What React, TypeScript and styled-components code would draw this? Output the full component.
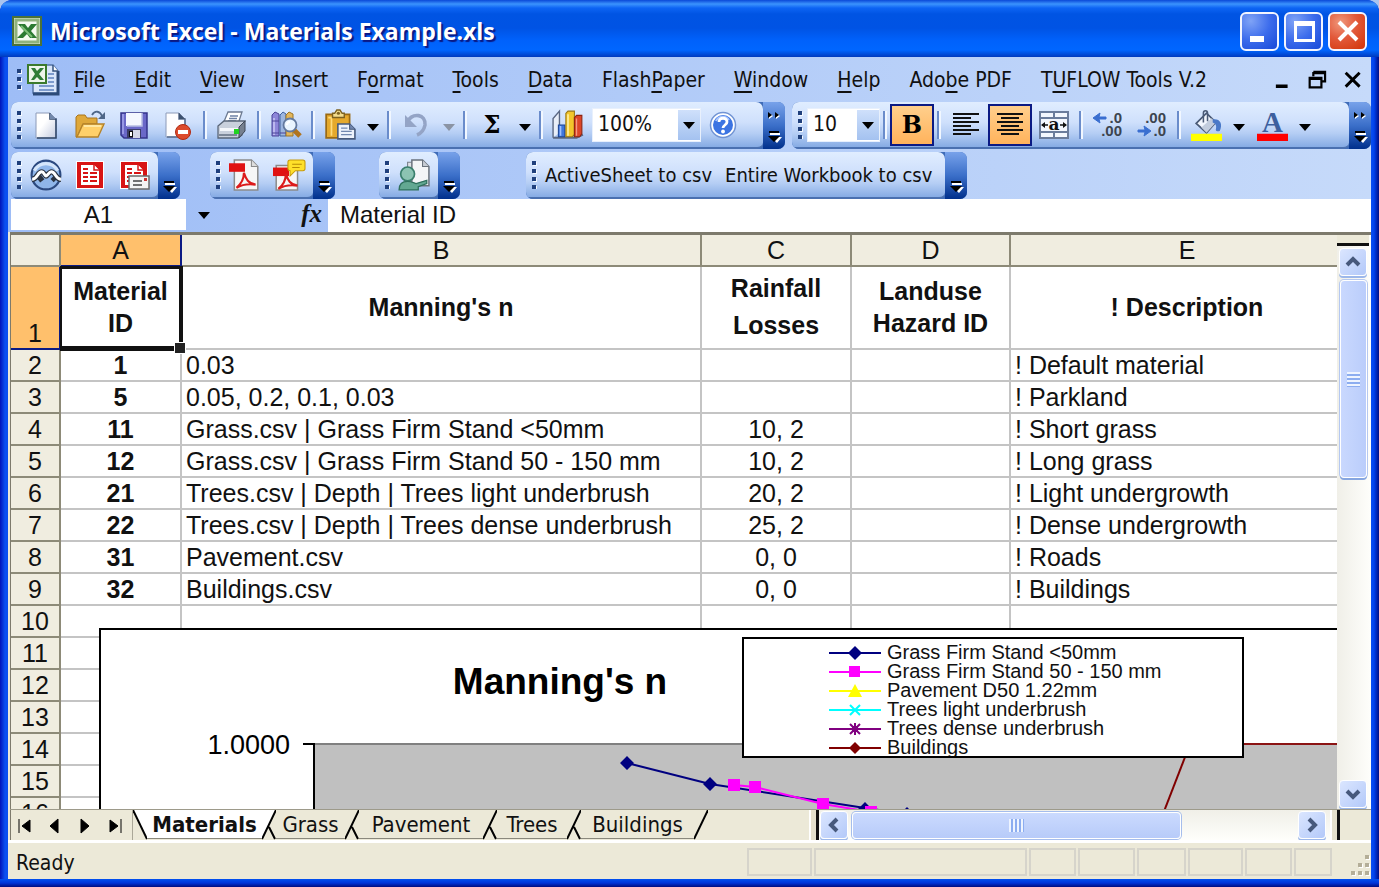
import React from "react";
import styled, { createGlobalStyle, css } from "styled-components";

const ui = `"DejaVu Sans Condensed", "Noto Sans", sans-serif`;
const cellFont = `"Liberation Sans", Arial, sans-serif`;

const GlobalStyle = createGlobalStyle`
  *, *::before, *::after { box-sizing: border-box; }
  body { margin: 0; background: #a9c4ef; font-family: ${ui}; color: #111; }
  button, input, select { font: inherit; color: inherit; margin: 0; }
`;

/* ---------- window frame ---------- */

const Window = styled.div`
  display: flex;
  flex-direction: column;
  height: 100vh;
  min-width: 900px;
  overflow: hidden;
  border-radius: 12px 12px 0 0;
  background: linear-gradient(to right, #0013b8 0, #0a4ff0 5px, #0a4ff0 8px, #0a4ff0 calc(100% - 8px), #0042ee calc(100% - 5px), #000f86 100%);
`;

const TitleBar = styled.header`
  flex: none;
  display: flex;
  align-items: center;
  height: 57px;
  padding: 5px 12px 0 12px;
  background: linear-gradient(#0a48d8 0, #3b93fd 4px, #0d64f4 8px, #0054e3 14px, #0053e4 28px, #0061fb 40px, #0066ff 50px, #0040c8 56px, #0038bb 57px);
`;

const Title = styled.h1`
  flex: 1;
  margin: 0 0 0 8px;
  font: 700 23px/30px "Open Sans", "Noto Sans", sans-serif;
  color: #fff;
  text-shadow: 2px 2px 1px #0a1883;
  white-space: nowrap;
`;

const WindowButtons = styled.div`
  display: flex;
  gap: 5px;
`;

const WindowButton = styled.button<{ $danger?: boolean }>`
  width: 39px;
  height: 39px;
  padding: 0;
  display: grid;
  place-items: center;
  border: 2px solid #f2f5ff;
  border-radius: 6px;
  background: ${(p) =>
    p.$danger
      ? "radial-gradient(circle at 30% 25%, #f0987c 0, #e2593a 45%, #d43a10 90%)"
      : "radial-gradient(circle at 25% 20%, #7fa3f6 0, #3c6cec 50%, #1f50dc 90%)"};
`;

const Body = styled.main`
  flex: 1;
  min-height: 0;
  display: flex;
  flex-direction: column;
  margin: 0 8px;
  background: #ece9d8;
`;

const BottomEdge = styled.div`
  flex: none;
  height: 8px;
  background: linear-gradient(#0050f0, #0034d8 4px, #000c80);
`;

/* ---------- menu and toolbars ---------- */

const Dock = styled.div`
  flex: none;
  background: linear-gradient(to right, #9ebdf6, #c6dafa);
`;

const MenuBar = styled.nav`
  display: flex;
  align-items: center;
  height: 45px;
  padding-left: 8px;
`;

const MenuItem = styled.button`
  height: 32px;
  padding: 0 15px 0 14px;
  border: 0;
  background: none;
  font-size: 21px;
  line-height: 32px;
  white-space: nowrap;
  u { text-underline-offset: 4px; text-decoration-thickness: 2px; }
`;

const Spacer = styled.div`
  flex: 1;
`;

const MdiButton = styled.button`
  width: 36px;
  height: 32px;
  padding: 0;
  border: 0;
  background: none;
`;

const ToolRow = styled.div<{ $second?: boolean }>`
  display: flex;
  align-items: flex-start;
  height: ${(p) => (p.$second ? 47 : 50)}px;
  padding-left: 3px;
`;

const Bar = styled.div<{ $grow?: boolean; $gap?: number }>`
  display: flex;
  align-items: stretch;
  height: 47px;
  margin-left: ${(p) => p.$gap ?? 0}px;
  border-radius: 7px;
  overflow: hidden;
  background: #3f6cb8;
  ${(p) => p.$grow && css`flex: 1;`}
`;

const BarFace = styled.div<{ $end?: number }>`
  flex: 1;
  display: flex;
  align-items: center;
  padding: 1px ${(p) => p.$end ?? 2}px 0 6px;
  border-bottom: 2px solid #4a70b0;
  border-radius: 0 7px 6px 0;
  background: linear-gradient(#e0edff 0, #cfe0fc 45%, #b4cdf4 70%, #86abe4 100%);
`;

const Cap = styled.button`
  width: 22px;
  padding: 0;
  border: 0;
  background: linear-gradient(#78a2ea, #3b6fc9 50%, #00308c);
`;

const GripDots = styled.span`
  flex: none;
  width: 5px;
  height: 28px;
  margin-right: 2px;
  background:
    linear-gradient(#20407c, #20407c) 0 0 / 4px 4px,
    repeating-linear-gradient(transparent 0 1px, #f4f9ff 1px 5px, transparent 5px 8px) 1px 0;
  background:
    repeating-linear-gradient(#20407c 0 4px, transparent 4px 8px) 0 0 / 4px 100% no-repeat,
    repeating-linear-gradient(transparent 0 1px, #f4f9ff 1px 5px, transparent 5px 8px) 1px 0 / 4px 100% no-repeat;
`;

const MenuGrip = styled(GripDots)`
  height: 21px;
  margin: 0 5px 0 1px;
`;

const ToolButton = styled.button<{ $on?: boolean }>`
  flex: none;
  width: 44px;
  height: 42px;
  padding: 0;
  display: grid;
  place-items: center;
  border: 2px solid ${(p) => (p.$on ? "#0b1a84" : "transparent")};
  background: ${(p) => (p.$on ? "linear-gradient(#ffcf8c, #ffb35c)" : "none")};
`;

const DropButton = styled.button`
  flex: none;
  width: 22px;
  height: 42px;
  padding: 0;
  border: 0;
  background: none;
`;

const TextButton = styled.button`
  height: 42px;
  padding: 0 7px 0 6px;
  border: 0;
  background: none;
  font-size: 20px;
  white-space: nowrap;
`;

const Divider = styled.span`
  flex: none;
  width: 4px;
  height: 28px;
  margin: 0 3px;
  border-left: 2px solid #6a8ccb;
  border-right: 2px solid #f1f7ff;
`;

const Glyph = styled.span<{ $size: number }>`
  font: 700 ${(p) => p.$size}px/34px "DejaVu Serif", serif;
  color: #000;
`;

const Combo = styled.label<{ $wide?: boolean }>`
  flex: none;
  display: grid;
  width: ${(p) => (p.$wide ? 109 : 73)}px;
  height: 34px;
  margin: 0 0 0 2px;
  background: #fff;
  border: 1px solid #e8f0fc;
`;

const ComboSelect = styled.select`
  grid-area: 1 / 1;
  appearance: none;
  width: 100%;
  padding: 0 24px 2px 5px;
  border: 0;
  border-radius: 0;
  background: transparent;
  font-size: 21px;
`;

const ComboArrow = styled.span`
  grid-area: 1 / 1;
  justify-self: end;
  display: grid;
  place-items: center;
  width: 22px;
  margin: 1px 0;
  background: linear-gradient(#cfe0fb, #a4c2f0);
  pointer-events: none;
`;

const FormulaBar = styled.div`
  display: flex;
  height: 33px;
  padding-left: 3px;
  font-family: ${cellFont};
  font-size: 24px;
`;

const NameBox = styled.input`
  width: 175px;
  height: 31px;
  padding: 0;
  border: 0;
  background: #fff;
  text-align: center;
`;

const NameDrop = styled.button`
  display: grid;
  place-items: center;
  width: 36px;
  height: 33px;
  padding: 0;
  border: 0;
  background: none;
`;

const FxButton = styled.button`
  width: 106px;
  padding: 0 6px 4px 0;
  border: 0;
  background: none;
  font: italic 700 25px/28px "Liberation Serif", serif;
  text-align: right;
`;

const FormulaInput = styled.input`
  flex: 1;
  min-width: 0;
  padding: 0 0 2px 12px;
  border: 0;
  background: #fff;
`;

/* ---------- worksheet ---------- */

const SheetRow = styled.section`
  flex: 1;
  min-height: 0;
  display: flex;
  margin-left: 2px;
  border-top: 3px solid #7d7a6c;
  border-left: 1px solid #7d7a6c;
`;

const Sheet = styled.div`
  position: relative;
  flex: 1;
  min-width: 0;
  overflow: hidden;
  background: #fff;
`;

const Grid = styled.table`
  width: 100%;
  table-layout: fixed;
  border-collapse: separate;
  border-spacing: 0;
  font: 25px/30px ${cellFont};
  color: #111;
`;

const headLine = css`
  border-right: 2px solid #8d8a78;
  border-bottom: 2px solid #8d8a78;
`;

const ColHead = styled.th<{ $on?: boolean }>`
  ${headLine}
  height: 32px;
  padding: 0;
  font-weight: 400;
  background: ${(p) => (p.$on ? "#ffc06c" : "#f0ede0")};
  ${(p) => p.$on && css`border-right-color: #0b1a84; border-bottom-color: #0b1a84;`}
  &:last-child { border-right: 0; padding-left: 26px; }
`;

const RowHead = styled.th<{ $on?: boolean }>`
  ${headLine}
  padding: 0;
  font-weight: 400;
  vertical-align: bottom;
  background: ${(p) => (p.$on ? "#ffc06c" : "#f0ede0")};
  ${(p) => p.$on && css`border-right-color: #0b1a84; border-bottom-color: #0b1a84;`}
`;

const Cell = styled.td<{ $center?: boolean; $bold?: boolean }>`
  height: 32px;
  padding: 0 4px;
  border-right: 2px solid #c4c4c4;
  border-bottom: 2px solid #c4c4c4;
  white-space: nowrap;
  text-align: ${(p) => (p.$center ? "center" : "left")};
  font-weight: ${(p) => (p.$bold ? 700 : 400)};
  &:last-child { border-right: 0; }
`;

const HeadingCell = styled(Cell)<{ $loose?: boolean; $current?: boolean }>`
  ${(p) => p.$current && css`position: relative; z-index: 1;`}
  height: 83px;
  padding: 0 0 2px;
  line-height: ${(p) => (p.$loose ? 37 : 32)}px;
  &:last-child { padding-left: 26px; }
`;

const Selection = styled.span`
  position: absolute;
  inset: -1px -3px -3px -1px;
  border: 4px solid #111;
  border-width: 3px 4px 5px 2px;
  &::after {
    content: "";
    position: absolute;
    right: -6px;
    bottom: -7px;
    width: 10px;
    height: 10px;
    background: #222;
    outline: 1px solid #fff;
  }
`;

/* ---------- embedded chart ---------- */

const ChartFrame = styled.figure`
  position: absolute;
  left: 88px;
  top: 393px;
  right: 0;
  bottom: 0;
  margin: 0;
  border: solid #000;
  border-width: 2px 0 0 2px;
  background: #fff;
  overflow: hidden;
`;

const Plot = styled.svg`
  display: block;
  width: 100%;
  height: 100%;
  font-family: ${cellFont};
`;

const Legend = styled.ul`
  position: absolute;
  left: 641px;
  top: 7px;
  width: 502px;
  height: 121px;
  margin: 0;
  padding: 4px 0 0 85px;
  border: 2px solid #000;
  background: #fff;
  overflow: hidden;
  list-style: none;
`;

const LegendItem = styled.li`
  display: flex;
  align-items: center;
  gap: 6px;
  height: 19px;
  font: 20px/19px ${cellFont};
  white-space: nowrap;
`;

/* ---------- scroll bars, tabs, status ---------- */

const VScroll = styled.div`
  flex: none;
  display: flex;
  flex-direction: column;
  align-items: center;
  width: 34px;
  padding: 0 2px 1px 0;
  background: linear-gradient(to right, #f0efe8, #fefefb);
`;

const VSplit = styled.div`
  width: 100%;
  height: 11px;
  margin-bottom: 2px;
  border-bottom: 3px solid #111;
  background: #ece9d8;
`;

const ScrollButton = styled.button`
  flex: none;
  width: 28px;
  height: 28px;
  padding: 0;
  display: grid;
  place-items: center;
  border: 1px solid #fff;
  border-radius: 4px;
  background: linear-gradient(135deg, #dbe6ff, #b3c9f9);
  box-shadow: 0 2px 0 #9db8ea;
`;

const VThumb = styled.div`
  display: grid;
  place-items: center;
  width: 27px;
  height: 198px;
  margin-top: 4px;
  border: 1px solid #fff;
  border-radius: 4px;
  background: linear-gradient(to right, #c9d8fe, #bacdfb);
  box-shadow: 0 2px 0 #86a6e0, 0 0 0 1px #b5c8f0;
`;

const VRidges = styled.span`
  width: 13px;
  height: 15px;
  background: repeating-linear-gradient(#eef4ff 0 2px, #8cadf0 2px 4px);
`;

const TabRow = styled.div`
  flex: none;
  display: flex;
  height: 31px;
  margin-left: 2px;
  border-top: 1px solid #9d9a8a;
  background: #ece9d8;
`;

const NavButtons = styled.div`
  display: flex;
  width: 123px;
  padding: 2px 1px 0 0;
  border-left: 1px solid #7d7a6c;
  border-right: 1px solid #aaa798;
`;

const NavButton = styled.button`
  flex: 1;
  display: grid;
  place-items: center;
  padding: 0 3px 0 0;
  border: 0;
  background: none;
`;

const Slant = styled.svg`
  flex: none;
  display: block;
  width: 14px;
  height: 30px;
`;

const Tab = styled.button<{ $active?: boolean; $w: number }>`
  flex: none;
  width: ${(p) => p.$w}px;
  height: 29px;
  padding: 2px 0 0;
  border: 0;
  border-bottom: 1px solid #8a887c;
  background: ${(p) => (p.$active ? "#fff" : "#ece9d8")};
  font-size: 22px;
  line-height: 26px;
  font-weight: ${(p) => (p.$active ? 700 : 400)};
  white-space: nowrap;
`;

const HScroll = styled.div`
  flex: none;
  display: flex;
  align-items: center;
  width: 39%;
  min-width: 300px;
`;

const HSplit = styled.span`
  flex: none;
  width: 10px;
  height: 30px;
  border-left: 2px solid #fff;
  border-right: 3px solid #111;
  background: #e4e0cc;
`;

const HTrack = styled.div`
  flex: 1;
  display: flex;
  align-items: center;
  height: 30px;
  padding: 0 4px 0 1px;
  background: linear-gradient(#f0efe8, #fefefb);
`;

const HThumb = styled.div`
  flex: none;
  display: grid;
  place-items: center;
  width: 65%;
  height: 27px;
  margin-left: 4px;
  border: 1px solid #fff;
  border-radius: 4px;
  background: linear-gradient(#cbdafe, #b7cbf9);
  box-shadow: 0 0 0 1px #a5bdec;
`;

const HRidges = styled.span`
  width: 15px;
  height: 13px;
  background: repeating-linear-gradient(to right, #eef4ff 0 2px, #8cadf0 2px 4px);
`;

const Corner = styled.div`
  flex: none;
  width: 31px;
`;

const StatusBar = styled.footer`
  flex: none;
  display: flex;
  align-items: center;
  height: 39px;
  border-top: 3px solid #fff;
  background: #ece9d8;
  padding: 2px 0 0 8px;
`;

const StatusText = styled.span`
  flex: 1;
  padding-top: 2px;
  font-size: 21px;
  line-height: 30px;
`;

const StatusPanel = styled.span<{ $w: number }>`
  flex: none;
  width: ${(p) => p.$w}px;
  height: 28px;
  margin-right: 2px;
  border: 2px solid #d6d4cb;
`;

const ResizeGrip = styled.svg`
  align-self: flex-end;
  flex: none;
  width: 37px;
  height: 26px;
`;

/* ---------- icons ---------- */

const IconSvg = styled.svg`
  display: block;
  margin: 0 auto;
  overflow: visible;
`;

const Ico = ({ children, size = 30 }: { children: React.ReactNode; size?: number }) => (
  <IconSvg width={size} height={size} viewBox="0 0 30 30" fill="none" aria-hidden="true">
    {children}
  </IconSvg>
);

const Arrow = ({ faded }: { faded?: boolean }) => (
  <svg width="12" height="7" viewBox="0 0 12 7" aria-hidden="true">
    <path d="M0 0h12L6 7z" fill={faded ? "#8b94a4" : "#000"} />
  </svg>
);

const ExcelIcon = () => (
  <svg width="30" height="30" viewBox="0 0 30 30" aria-hidden="true">
    <rect x="1" y="1" width="28" height="28" fill="#dcebd4" stroke="#4c7238" strokeWidth="2" />
    <rect x="4" y="4" width="22" height="22" fill="#f4faf1" stroke="#8fb27c" strokeWidth="3" />
    <path d="M6 8h7l3 4 3-4h6l-6 7 6 7h-7l-3-4-4 4H5l7-7z" fill="#2c7a32" />
    <path d="M9 10l11 11" stroke="#7fc079" strokeWidth="2" />
  </svg>
);

const WorkbookIcon = () => (
  <svg width="33" height="33" viewBox="0 0 33 33" aria-hidden="true">
    <path d="M6 2h20l5 6v22H6z" fill="#d9e6fb" stroke="#5474a6" strokeWidth="1.500" />
    <path d="M31 8v23H6" fill="none" stroke="#2c4a78" strokeWidth="3" />
    <path d="M26 2v6h5" fill="#fff" stroke="#33527e" strokeWidth="1.500" />
    <path d="M21 11h6M21 15h6M21 19h6M12 23h15M12 27h15" stroke="#5f82be" strokeWidth="1.600" />
    <rect x="1" y="2" width="18" height="18" fill="#eef6ea" stroke="#3b7a2c" strokeWidth="2" />
    <path d="M4 5h4l2 3 3-3h4l-5 6 5 6h-4l-3-3-3 3H4l4-6z" fill="#2f7d36" />
  </svg>
);

const NewIcon = () => (
  <Ico>
    <defs>
      <linearGradient id="page" x1="0" y1="0" x2="1" y2="1">
        <stop offset="0.4" stopColor="#fff" />
        <stop offset="1" stopColor="#c3cbe0" />
      </linearGradient>
    </defs>
    <path d="M5 3h14l6 6v19H5z" fill="url(#page)" stroke="#8c9ab8" strokeWidth="1" />
    <path d="M19 3v6h6v19H6" stroke="#33496b" strokeWidth="1.600" />
    <path d="M19 3l6 6h-6z" fill="#7288aa" />
  </Ico>
);

const OpenIcon = () => (
  <Ico>
    <path d="M1 7l2-2h7l2 3h10v6H8L2 27H1z" fill="#dfa83a" stroke="#a9741c" />
    <path d="M8 14h21l-6 13H2z" fill="#ffd06a" stroke="#b5832a" strokeWidth="1.400" />
    <path d="M9 16h17" stroke="#fff0b8" strokeWidth="1.500" />
    <path d="M17 5c3-5 8-4 10 1" stroke="#4f6788" strokeWidth="1.800" />
    <path d="M23 9h7V2z" fill="#4f6788" />
  </Ico>
);

const SaveIcon = () => (
  <Ico>
    <path d="M2 3h26v25H5l-3-3z" fill="#6a68c8" stroke="#34348c" strokeWidth="1.500" />
    <path d="M4 4v20" stroke="#a9a8ee" strokeWidth="1.500" />
    <rect x="7" y="3" width="16" height="13" fill="#f4f7ff" />
    <path d="M23 3v13H8" stroke="#b7bde4" strokeWidth="1.500" />
    <rect x="8" y="19" width="14" height="9" fill="#3b3d68" />
    <rect x="10" y="21" width="4" height="6" fill="#111" />
    <rect x="14" y="20" width="7" height="8" fill="#d3d6e6" />
    <path d="M11 22h2v4h-2z" fill="#fff" />
  </Ico>
);

const PermissionIcon = () => (
  <Ico>
    <path d="M3 3h13l6 6v18H3z" fill="#fdfdff" stroke="#8c9ab8" />
    <path d="M16 3v6h6v18H4" stroke="#5a6d8e" strokeWidth="1.500" />
    <path d="M16 3l6 6h-6z" fill="#3c516f" />
    <circle cx="20" cy="22" r="7.500" fill="#dc4a2c" stroke="#b02a12" />
    <rect x="15" y="20" width="10" height="4" fill="#fff" />
  </Ico>
);

const PrintIcon = () => (
  <Ico>
    <path d="M11 2h14l-4 12H6z" fill="#fff" stroke="#6c7a92" strokeWidth="1.300" />
    <path d="M13 6h8M12 8.500h8M11 11h8" stroke="#6f82a6" strokeWidth="1.300" />
    <path d="M1 16l6-5h21l-3 6v8l-4 3H1z" fill="#c9d0dc" stroke="#5a6678" strokeWidth="1.300" />
    <path d="M28 11v10l-6 7v-11z" fill="#76808f" stroke="#3e4757" />
    <path d="M2 25h18" stroke="#7c8798" strokeWidth="2" />
    <path d="M3 18h18v3H3z" fill="#f5f7fb" />
    <rect x="17" y="19" width="5" height="5" fill="#20d420" />
  </Ico>
);

const ResearchIcon = () => (
  <Ico>
    <path d="M1 5l3-3 4 2v22H1z" fill="#8d86d8" stroke="#4b4597" />
    <path d="M3 8v17" stroke="#cdc9f6" strokeWidth="1.500" />
    <path d="M9 5l3-3 3 2v22H9z" fill="#9db6e0" stroke="#41639f" />
    <path d="M15 5l3-3 4 2v22h-7z" fill="#e3b65a" stroke="#9b7425" />
    <path d="M1 11h7M1 23h7M9 23h6" stroke="#4b4597" />
    <path d="M23 20l6 6" stroke="#b0741e" strokeWidth="5" />
    <circle cx="19" cy="15" r="6.500" fill="#e9f4ff" stroke="#63799e" strokeWidth="1.800" />
    <path d="M16 15c0-2 1-3 3-3" stroke="#fff" strokeWidth="2" />
  </Ico>
);

const PasteIcon = () => (
  <Ico size={32}>
    <path d="M2 5h22v22H2z" fill="#e5a92c" stroke="#9a6a14" strokeWidth="1.600" />
    <path d="M4 8h3v17" stroke="#ffdb7c" strokeWidth="1.600" />
    <path d="M8 8V4h2l2-3h3l2 3h2v4z" fill="#f3dd8e" stroke="#7c6120" strokeWidth="1.300" />
    <circle cx="13.500" cy="4" r="1.500" fill="#7c6120" />
    <path d="M13 14h11l5 5v9H13z" fill="#edf2fb" stroke="#46597c" strokeWidth="1.500" />
    <path d="M16 18h6M16 21h10M16 24h10" stroke="#7288b0" strokeWidth="1.200" />
    <path d="M24 14v5h5" fill="#7288b0" stroke="#46597c" />
  </Ico>
);

const UndoIcon = () => (
  <Ico>
    <path d="M6 12c6-10 19-8 18 3-1 5-3 8-8 10" stroke="#94a4c6" strokeWidth="3.600" />
    <path d="M4 5v12h12z" fill="#94a4c6" />
  </Ico>
);

const ChartIcon = () => (
  <Ico size={32}>
    <path d="M1 27V9l6-7v20" fill="#e8eef8" stroke="#5a6782" strokeWidth="1.300" />
    <path d="M1 27h22l6-3" stroke="#5a6782" strokeWidth="2" />
    <path d="M6 15h6v11H6z" fill="#3f77dc" stroke="#1d4696" />
    <path d="M13 4l2-2h6v22l-2 2h-6z" fill="#f2c62c" stroke="#9a7712" />
    <path d="M15 5v20" stroke="#fff1a6" strokeWidth="1.500" />
    <path d="M21 8l2-2h5v17l-2 3h-5z" fill="#dc4628" stroke="#8e2411" />
    <path d="M23 9v16" stroke="#f39a82" strokeWidth="1.200" />
    <path d="M8 16v9" stroke="#9ec0ff" strokeWidth="1.500" />
  </Ico>
);

const HelpIcon = () => (
  <Ico>
    <circle cx="15" cy="15" r="12.500" fill="#fff" stroke="#7194d4" strokeWidth="1.500" />
    <circle cx="15" cy="15" r="10" fill="#3c74e2" />
    <path d="M8 11c2-5 10-6 13-1" stroke="#a6c5ff" strokeWidth="2" />
    <path d="M11 12c0-5 8-5 8 0 0 3-4 3-4 6" stroke="#fff" strokeWidth="2.800" />
    <circle cx="15" cy="21.500" r="1.900" fill="#fff" />
  </Ico>
);

const AlignIcon = ({ center }: { center?: boolean }) => (
  <Ico>
    <path
      d={
        center
          ? "M2 4h26M6 8h18M2 12h26M6 16h18M2 20h26M6 24h18"
          : "M2 4h26M2 8h18M2 12h26M2 16h18M2 20h26M2 24h18"
      }
      stroke="#111"
      strokeWidth="2"
    />
  </Ico>
);

const MergeIcon = () => (
  <Ico>
    <rect x="1" y="2" width="28" height="26" fill="#f3f7fe" stroke="#6a7c9c" strokeWidth="2" />
    <path d="M1 8h28M1 22h28M15 2v6M15 22v6" stroke="#6a7c9c" strokeWidth="2" />
    <path d="M3 15h6M21 15h6" stroke="#111" strokeWidth="1.600" />
    <path d="M2 15l4-3v6zM28 15l-4-3v6z" fill="#111" />
    <text x="15" y="20" textAnchor="middle" fontSize="17" fontWeight="700" fontFamily="DejaVu Serif, serif" fill="#111">a</text>
  </Ico>
);

const DecimalIcon = ({ more }: { more?: boolean }) => (
  <Ico>
    <g fontFamily="Liberation Sans, sans-serif" fontWeight="700" fontSize="15" fill="#3c444f" textAnchor="end">
      <text x="29" y="13">{more ? ".0" : ".00"}</text>
      <text x="29" y="26">{more ? ".00" : ".0"}</text>
    </g>
    {more ? (
      <path d="M0 8l7-5-1 4h7v2H6l1 4z" fill="#3a6fd0" stroke="#3a6fd0" />
    ) : (
      <path d="M14 21l-7-5 1 4H1v2h7l-1 4z" fill="#3a6fd0" stroke="#3a6fd0" />
    )}
  </Ico>
);

const FillIcon = () => (
  <Ico size={31}>
    <path d="M5 13L15 3l9 9-9 10z" fill="#f2f6fd" stroke="#4a5a76" strokeWidth="1.600" />
    <path d="M15 22l9-10-4-4-10 9z" fill="#c3cddd" />
    <path d="M12 12V3c0-3 4-3 4 0v8" stroke="#4a5a76" strokeWidth="1.500" />
    <path d="M21 9c7-1 10 4 7 11-1 1-4 1-4-1 1-4 0-6-3-7z" fill="#4a79c8" />
    <rect x="0" y="23" width="30" height="7" fill="#ffff00" />
  </Ico>
);

const FontColorIcon = () => (
  <Ico size={31}>
    <text x="15" y="21" textAnchor="middle" fontSize="28" fontWeight="700" fontFamily="Liberation Serif, serif" fill="#3d5f9e">A</text>
    <rect x="0" y="23" width="30" height="7" fill="#ff0000" />
  </Ico>
);

const FlashIcon = () => (
  <Ico size={32}>
    <circle cx="15" cy="15" r="13.500" fill="#8fb6ea" stroke="#2c4a80" strokeWidth="2" />
    <path d="M4 11c5-9 17-9 22 0" stroke="#d5e6fb" strokeWidth="3" />
    <path d="M2 19c5 0 5-7 9-7 2 0 3 4 4 4s3-4 5-4c4 0 4 7 9 7M12 17l-4 3M21 17l3 3" stroke="#2b3340" strokeWidth="5" />
    <path d="M2 19c5 0 5-7 9-7 2 0 3 4 4 4s3-4 5-4c4 0 4 7 9 7" stroke="#fff" strokeWidth="2.800" />
  </Ico>
);

const RedSheetIcon = ({ mail }: { mail?: boolean }) => (
  <Ico>
    <rect x="1" y="1" width="28" height="28" fill="#fff" />
    <rect x="2" y="2" width="26" height="26" fill="#d81414" />
    <path d="M6 5h13l5 5v15H6z" fill="#fff" />
    <path d="M19 5v5h5" fill="#fff" stroke="#d81414" strokeWidth="1.500" />
    <path d="M8 9h5M8 13h5M15 13h7M8 17h5M15 17h7M8 21h5M15 21h7" stroke="#d81414" strokeWidth="2" />
    {mail && (
      <g>
        <rect x="10" y="16" width="20" height="13" fill="#f4f4f4" stroke="#6a6a6a" strokeWidth="1.500" />
        <path d="M14 21h9M14 25h9" stroke="#444" strokeWidth="1.500" />
        <rect x="25" y="18" width="3" height="3" fill="#c33" />
      </g>
    )}
  </Ico>
);

const PdfIcon = ({ note }: { note?: boolean }) => (
  <Ico size={32}>
    <path d={note ? "M3 6h17l3 3v20H3z" : "M5 1h16l6 6v22H5z"} fill="#f6f6f6" stroke="#8a8a8a" strokeWidth="1.400" />
    {!note && <path d="M21 1v6h6" fill="#ddd" stroke="#8a8a8a" />}
    <rect x="0" y={note ? 8 : 4} width="15" height="8" fill="#e01212" />
    <path
      d="M7 27c5-4 7-8 7-14 2 6 4 10 11 11-7-1-13 0-18 3z"
      stroke="#dc1a1a"
      strokeWidth="2"
      transform={note ? "translate(-2 1)" : undefined}
    />
    {note && <path d="M16 1h12q2 0 2 2v6q0 2-2 2h-7l-5 5v-5q-2 0-2-2V3q0-2 2-2z" fill="#ffe02a" stroke="#c79a08" />}
    {note && <path d="M18 5h9M18 8h7" stroke="#b88a06" />}
  </Ico>
);

const ReviewIcon = () => (
  <Ico size={32}>
    <path d="M9 3h14v18H9z" fill="#dfe2e6" stroke="#777f88" />
    <path d="M13 1h10l6 6v18H13z" fill="#f4f5f7" stroke="#6a727c" strokeWidth="1.400" />
    <path d="M23 1v6h6" fill="#c7ccd4" stroke="#6a727c" />
    <circle cx="9" cy="14" r="6.500" fill="#8cc3b2" stroke="#3a7f6c" strokeWidth="1.600" />
    <path d="M1 29c0-6 3-8 8-8 3 0 5 1 8 2l10-3v3l-8 3v3z" fill="#63a892" stroke="#2f705d" strokeWidth="1.200" />
  </Ico>
);

const CapGlyph = ({ more }: { more?: boolean }) => (
  <svg width="22" height="46" viewBox="0 0 22 46" aria-hidden="true">
    {more && <path d="M6 11l4 3-4 3zM13 11l4 3-4 3z" fill="#fff" />}
    {more && <path d="M5 10l4 3-4 3zM12 10l4 3-4 3z" fill="#000" />}
    <path d="M7 31h10v2H7zM8 35h11l-5 6z" fill="#fff" />
    <path d="M6 29h10v2H6zM5 34h12l-6 6z" fill="#000" />
  </svg>
);

const Chevron = ({ d }: { d: string }) => (
  <svg width="18" height="18" viewBox="0 0 18 18" fill="none" aria-hidden="true">
    <path d={d} stroke="#47597c" strokeWidth="4" />
  </svg>
);

/* ---------- data ---------- */

const menus: [string, string, string][] = [
  ["", "F", "ile"],
  ["", "E", "dit"],
  ["", "V", "iew"],
  ["", "I", "nsert"],
  ["F", "o", "rmat"],
  ["", "T", "ools"],
  ["", "D", "ata"],
  ["Flash", "P", "aper"],
  ["", "W", "indow"],
  ["", "H", "elp"],
  ["Ado", "b", "e PDF"],
  ["T", "U", "FLOW Tools V.2"],
];

const rows: [string, string, string, string, string][] = [
  ["1", "0.03", "", "", "! Default material"],
  ["5", "0.05, 0.2, 0.1, 0.03", "", "", "! Parkland"],
  ["11", "Grass.csv | Grass Firm Stand <50mm", "10, 2", "", "! Short grass"],
  ["12", "Grass.csv | Grass Firm Stand 50 - 150 mm", "10, 2", "", "! Long grass"],
  ["21", "Trees.csv | Depth | Trees light underbrush", "20, 2", "", "! Light undergrowth"],
  ["22", "Trees.csv | Depth | Trees dense underbrush", "25, 2", "", "! Dense undergrowth"],
  ["31", "Pavement.csv", "0, 0", "", "! Roads"],
  ["32", "Buildings.csv", "0, 0", "", "! Buildings"],
  ...Array.from({ length: 7 }, () => ["", "", "", "", ""] as [string, string, string, string, string]),
];

const series = [
  { name: "Grass Firm Stand <50mm", color: "#000080", mark: "M26 2l7 7-7 7-7-7z" },
  { name: "Grass Firm Stand 50 - 150 mm", color: "#ff00ff", mark: "M20 3h11v11H20z" },
  { name: "Pavement D50 1.22mm", color: "#ffff00", mark: "M26 2l7 13H19z" },
  { name: "Trees light underbrush", color: "#00ffff", mark: "", cross: "M21 4l10 10M31 4L21 14" },
  { name: "Trees dense underbrush", color: "#800080", mark: "M23 6h6v6h-6z", cross: "M21 4l10 10M31 4L21 14M26 3v12" },
  { name: "Buildings", color: "#800000", mark: "M26 3l6 6-6 6-6-6z" },
];

const tabs = [
  { name: "Materials", w: 115 },
  { name: "Grass", w: 69 },
  { name: "Pavement", w: 124 },
  { name: "Trees", w: 70 },
  { name: "Buildings", w: 113 },
];

const panels = [65, 213, 47, 57, 49, 55, 47, 38];

const navIcons = [
  { label: "First sheet", d: "M2 1v14M13 2v12L5 8z" },
  { label: "Previous sheet", d: "M11 1v14L3 8z" },
  { label: "Next sheet", d: "M4 1v14l8-7z" },
  { label: "Last sheet", d: "M14 1v14M3 2v12l8-6z" },
];

const diamond = (x: number, y: number) => `M${x} ${y - 7}l7 7-7 7-7-7z`;

/* ---------- parts ---------- */

const ToolCap = ({ more }: { more?: boolean }) => (
  <Cap aria-label="Toolbar options">
    <CapGlyph more={more} />
  </Cap>
);

const Drop = ({ label, faded }: { label: string; faded?: boolean }) => (
  <DropButton aria-label={label}>
    <Arrow faded={faded} />
  </DropButton>
);

const ComboBox = ({ label, value, wide }: { label: string; value: string; wide?: boolean }) => (
  <Combo $wide={wide}>
    <ComboSelect aria-label={label} defaultValue={value}>
      <option>{value}</option>
    </ComboSelect>
    <ComboArrow>
      <Arrow />
    </ComboArrow>
  </Combo>
);

const Chart = () => (
  <ChartFrame>
    <Plot aria-label="Manning's n chart">
      <text x="459" y="64" textAnchor="middle" fontSize="37" fontWeight="700">Manning's n</text>
      <text x="189" y="124" textAnchor="end" fontSize="27">1.0000</text>
      <rect x="213" y="114" width="100%" height="100%" fill="#c0c0c0" />
      <path d="M213 114h500" stroke="#808080" strokeWidth="2" />
      <path d="M202 114h11v900" fill="none" stroke="#000" strokeWidth="2" />
      <rect x="1143" y="113" width="100%" height="2" fill="#8b1414" />
      <path d="M1086 122L1062 184" stroke="#800000" strokeWidth="2" />
      <path d="M526 133L609 154 764 178 806 184" fill="none" stroke="#000080" strokeWidth="2" />
      <path d="M633 155L654 157 722 174 770 182" fill="none" stroke="#ff00ff" strokeWidth="2" />
      <path d={diamond(526, 133) + diamond(609, 154) + diamond(764, 179) + diamond(806, 184)} fill="#000080" />
      <path d="M627 149h12v12h-12zM648 151h12v12h-12zM716 168h12v12h-12zM764 176h12v12h-12z" fill="#ff00ff" />
    </Plot>
    <Legend>
      {series.map((s) => (
        <LegendItem key={s.name}>
          <svg width="52" height="18" viewBox="0 0 52 18" aria-hidden="true">
            <path d={`M0 9h52${s.cross ?? ""}`} stroke={s.color} strokeWidth="2" />
            <path d={s.mark} fill={s.color} />
          </svg>
          {s.name}
        </LegendItem>
      ))}
    </Legend>
  </ChartFrame>
);

const Worksheet = () => (
  <Sheet>
    <Grid>
      <colgroup>
        <col style={{ width: 50 }} />
        <col style={{ width: 121 }} />
        <col style={{ width: 520 }} />
        <col style={{ width: 150 }} />
        <col style={{ width: 159 }} />
        <col />
      </colgroup>
      <thead>
        <tr>
          <ColHead aria-label="Select all" />
          {["A", "B", "C", "D", "E"].map((c, i) => (
            <ColHead key={c} scope="col" $on={i === 0}>{c}</ColHead>
          ))}
        </tr>
      </thead>
      <tbody>
        <tr>
          <RowHead scope="row" $on>1</RowHead>
          <HeadingCell $center $bold $current>
            Material<br />ID
            <Selection />
          </HeadingCell>
          <HeadingCell $center $bold>Manning's n</HeadingCell>
          <HeadingCell $center $bold $loose>Rainfall<br />Losses</HeadingCell>
          <HeadingCell $center $bold>Landuse<br />Hazard ID</HeadingCell>
          <HeadingCell $center $bold>! Description</HeadingCell>
        </tr>
        {rows.map((r, i) => (
          <tr key={i}>
            <RowHead scope="row">{i + 2}</RowHead>
            <Cell $center $bold>{r[0]}</Cell>
            <Cell>{r[1]}</Cell>
            <Cell $center>{r[2]}</Cell>
            <Cell>{r[3]}</Cell>
            <Cell>{r[4]}</Cell>
          </tr>
        ))}
      </tbody>
    </Grid>
    <Chart />
  </Sheet>
);

export default function App() {
  return (
    <Window>
      <GlobalStyle />
      <TitleBar>
        <ExcelIcon />
        <Title>Microsoft Excel - Materials Example.xls</Title>
        <WindowButtons>
          <WindowButton aria-label="Minimize">
            <Ico><path d="M5 20h14v6H5z" fill="#fff" /></Ico>
          </WindowButton>
          <WindowButton aria-label="Maximize">
            <Ico><path d="M5 5h21v21H5zM8 10v13h15V10z" fill="#fff" fillRule="evenodd" /></Ico>
          </WindowButton>
          <WindowButton aria-label="Close" $danger>
            <Ico><path d="M6 6l18 18M24 6L6 24" stroke="#fff" strokeWidth="4" /></Ico>
          </WindowButton>
        </WindowButtons>
      </TitleBar>

      <Body>
        <Dock>
          <MenuBar>
            <MenuGrip />
            <WorkbookIcon />
            {menus.map(([a, u, b]) => (
              <MenuItem key={a + u + b}>{a}<u>{u}</u>{b}</MenuItem>
            ))}
            <Spacer />
            <MdiButton aria-label="Minimize workbook">
              <Ico size={22}><path d="M8 21h16v5H8z" fill="#000" /></Ico>
            </MdiButton>
            <MdiButton aria-label="Restore workbook">
              <Ico size={22}>
                <path d="M10 4h16v13h-5M10 4v6M10 5.500h16M5 12h16v13H5zM5 13.500h16" stroke="#000" strokeWidth="3" />
              </Ico>
            </MdiButton>
            <MdiButton aria-label="Close workbook">
              <Ico size={22}><path d="M5 5l19 19M24 5L5 24" stroke="#000" strokeWidth="4" /></Ico>
            </MdiButton>
          </MenuBar>

          <ToolRow>
            <Bar>
              <BarFace $end={18}>
                <GripDots />
                <ToolButton aria-label="New"><NewIcon /></ToolButton>
                <ToolButton aria-label="Open"><OpenIcon /></ToolButton>
                <ToolButton aria-label="Save"><SaveIcon /></ToolButton>
                <ToolButton aria-label="Permission"><PermissionIcon /></ToolButton>
                <Divider />
                <ToolButton aria-label="Print"><PrintIcon /></ToolButton>
                <Divider />
                <ToolButton aria-label="Research"><ResearchIcon /></ToolButton>
                <Divider />
                <ToolButton aria-label="Paste"><PasteIcon /></ToolButton>
                <Drop label="Paste options" />
                <Divider />
                <ToolButton aria-label="Undo"><UndoIcon /></ToolButton>
                <Drop label="Undo history" faded />
                <Divider />
                <ToolButton aria-label="AutoSum"><Glyph $size={24}>Σ</Glyph></ToolButton>
                <Drop label="AutoSum options" />
                <Divider />
                <ToolButton aria-label="Chart Wizard"><ChartIcon /></ToolButton>
                <ComboBox label="Zoom" value="100%" wide />
                <ToolButton aria-label="Help"><HelpIcon /></ToolButton>
              </BarFace>
              <ToolCap more />
            </Bar>
            <Bar $grow $gap={7}>
              <BarFace>
                <GripDots />
                <ComboBox label="Font size" value="10" />
                <Divider />
                <ToolButton aria-label="Bold" $on><Glyph $size={24}>B</Glyph></ToolButton>
                <Divider />
                <ToolButton aria-label="Align left"><AlignIcon /></ToolButton>
                <ToolButton aria-label="Center" $on><AlignIcon center /></ToolButton>
                <ToolButton aria-label="Merge and center"><MergeIcon /></ToolButton>
                <Divider />
                <ToolButton aria-label="Increase decimal"><DecimalIcon more /></ToolButton>
                <ToolButton aria-label="Decrease decimal"><DecimalIcon /></ToolButton>
                <Divider />
                <ToolButton aria-label="Fill color"><FillIcon /></ToolButton>
                <Drop label="Fill color options" />
                <ToolButton aria-label="Font color"><FontColorIcon /></ToolButton>
                <Drop label="Font color options" />
              </BarFace>
              <ToolCap more />
            </Bar>
          </ToolRow>

          <ToolRow $second>
            <Bar>
              <BarFace>
                <GripDots />
                <ToolButton aria-label="Convert with FlashPaper"><FlashIcon /></ToolButton>
                <ToolButton aria-label="Export sheet"><RedSheetIcon /></ToolButton>
                <ToolButton aria-label="Export and mail sheet"><RedSheetIcon mail /></ToolButton>
              </BarFace>
              <ToolCap />
            </Bar>
            <Bar $gap={30}>
              <BarFace>
                <GripDots />
                <ToolButton aria-label="Convert to PDF"><PdfIcon /></ToolButton>
                <ToolButton aria-label="Convert and review"><PdfIcon note /></ToolButton>
              </BarFace>
              <ToolCap />
            </Bar>
            <Bar $gap={44}>
              <BarFace>
                <GripDots />
                <ToolButton aria-label="Send for review"><ReviewIcon /></ToolButton>
              </BarFace>
              <ToolCap />
            </Bar>
            <Bar $gap={66}>
              <BarFace $end={6}>
                <GripDots />
                <TextButton>ActiveSheet to csv</TextButton>
                <TextButton>Entire Workbook to csv</TextButton>
              </BarFace>
              <ToolCap />
            </Bar>
          </ToolRow>

          <FormulaBar>
            <NameBox aria-label="Name box" defaultValue="A1" />
            <NameDrop aria-label="Named ranges"><Arrow /></NameDrop>
            <FxButton aria-label="Insert function">fx</FxButton>
            <FormulaInput aria-label="Formula" defaultValue="Material ID" />
          </FormulaBar>
        </Dock>

        <SheetRow>
          <Worksheet />
          <VScroll>
            <VSplit />
            <ScrollButton aria-label="Scroll up"><Chevron d="M3 12l6-6 6 6" /></ScrollButton>
            <VThumb><VRidges /></VThumb>
            <Spacer />
            <ScrollButton aria-label="Scroll down"><Chevron d="M3 6l6 6 6-6" /></ScrollButton>
          </VScroll>
        </SheetRow>

        <TabRow>
          <NavButtons>
            {navIcons.map((n) => (
              <NavButton key={n.label} aria-label={n.label}>
                <svg width="16" height="16" viewBox="0 0 16 16" aria-hidden="true">
                  <path d={n.d} fill="#000" stroke="#000" strokeWidth="1" />
                </svg>
              </NavButton>
            ))}
          </NavButtons>
          <Slant aria-hidden="true">
            <path d="M0 0h14v29z" fill="#fff" />
            <path d="M0 0l14 29" stroke="#000" strokeWidth="2" />
          </Slant>
          {tabs.map((t, i) => (
            <React.Fragment key={t.name}>
              <Tab $w={t.w} $active={i === 0}>{t.name}</Tab>
              <Slant aria-hidden="true">
                {i === 0 && <path d="M0 0h14L0 29z" fill="#fff" />}
                <path d={`M0 29L14 0${i < 4 ? "M7 17l6 12" : ""}`} stroke="#000" strokeWidth="2" />
              </Slant>
            </React.Fragment>
          ))}
          <Spacer />
          <HScroll>
            <HSplit />
            <HTrack>
              <ScrollButton aria-label="Scroll left"><Chevron d="M12 3L6 9l6 6" /></ScrollButton>
              <HThumb><HRidges /></HThumb>
              <Spacer />
              <ScrollButton aria-label="Scroll right"><Chevron d="M6 3l6 6-6 6" /></ScrollButton>
            </HTrack>
            <HSplit />
          </HScroll>
          <Corner />
        </TabRow>

        <StatusBar>
          <StatusText>Ready</StatusText>
          {panels.map((w, i) => (
            <StatusPanel key={i} $w={w} />
          ))}
          <ResizeGrip aria-hidden="true">
            <path d="M32 3h4v4h-4zM25 11h4v4h-4zM32 11h4v4h-4zM18 19h4v4h-4zM25 19h4v4h-4zM32 19h4v4h-4z" fill="#fff" />
            <path d="M31 2h4v4h-4zM24 10h4v4h-4zM31 10h4v4h-4zM17 18h4v4h-4zM24 18h4v4h-4zM31 18h4v4h-4z" fill="#b4ae98" />
          </ResizeGrip>
        </StatusBar>
      </Body>
      <BottomEdge />
    </Window>
  );
}
